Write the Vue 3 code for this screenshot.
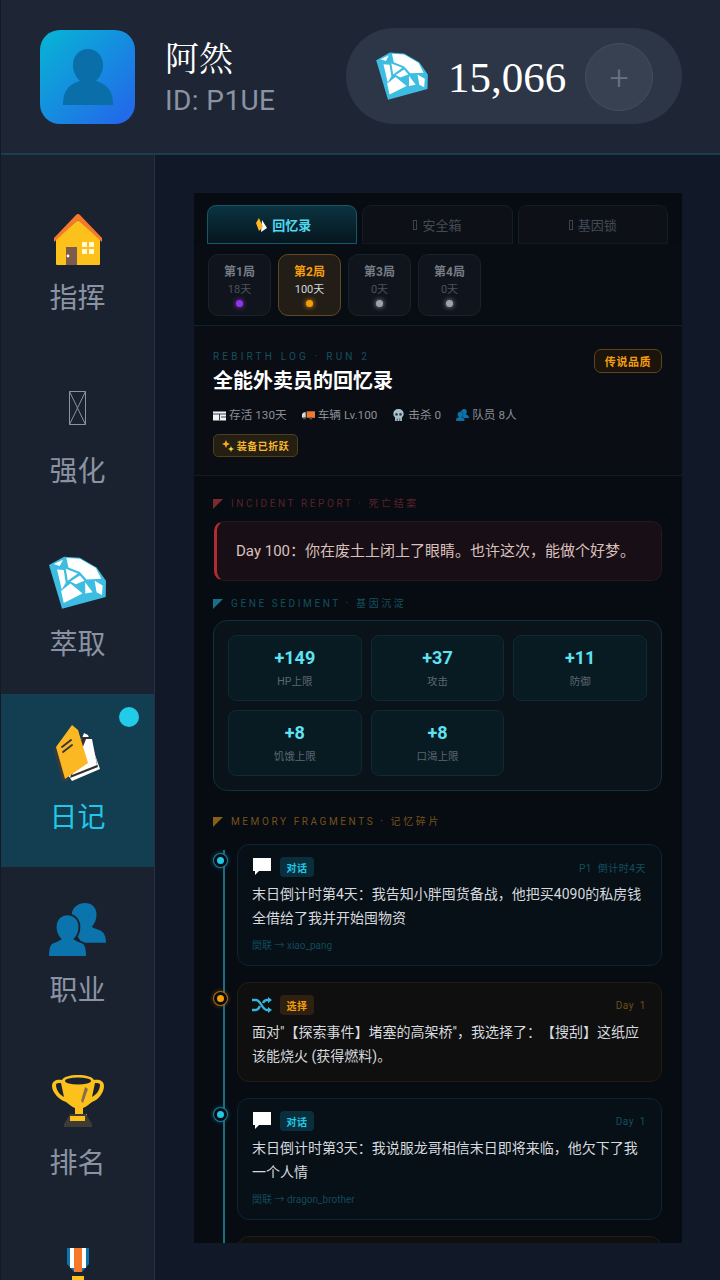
<script setup>
const nav = [
  { id: 'house', label: '指挥' },
  { id: 'tofu', label: '强化' },
  { id: 'gem', label: '萃取' },
  { id: 'book', label: '日记', active: true },
  { id: 'people', label: '职业' },
  { id: 'trophy', label: '排名' },
  { id: 'medal', label: '' }
]
const rounds = [
  { t: '第1局', d: '18天', c: 'purple' },
  { t: '第2局', d: '100天', c: 'orange', active: true },
  { t: '第3局', d: '0天', c: 'gray' },
  { t: '第4局', d: '0天', c: 'gray' }
]
const genes = [
  ['+149', 'HP上限'], ['+37', '攻击'], ['+11', '防御'], ['+8', '饥饿上限'], ['+8', '口渴上限']
]
const logs = [
  { kind: 'talk', icon: 'bubble', tag: '对话', meta: 'P1  倒计时4天', text: '末日倒计时第4天：我告知小胖囤货备战，他把买4090的私房钱全借给了我并开始囤物资', link: '関联 → xiao_pang' },
  { kind: 'pick', icon: 'shuffle', tag: '选择', meta: 'Day  1', text: '面对"【探索事件】堵塞的高架桥"，我选择了：【搜刮】这纸应该能烧火 (获得燃料)。' },
  { kind: 'talk', icon: 'bubble', tag: '对话', meta: 'Day  1', text: '末日倒计时第3天：我说服龙哥相信末日即将来临，他欠下了我一个人情', link: '関联 → dragon_brother' },
  { kind: 'pick stub' }
]
</script>

<template>
  <svg class="defs" aria-hidden="true">
    <symbol id="gem" viewBox="0 0 170 158">
      <path fill="#3dbde2" d="M0 27 45 2 92 5 142 34 170 74 169 122 39 157Z" />
      <path fill="#fff" d="M14 24 42 11 32 30ZM52 6 92 8 140 36 156 68 112 70 92 48 58 34ZM50 38 86 52 56 74ZM24 40 44 42 50 80 38 100ZM92 58 106 74 80 84 64 76ZM64 82 100 112 44 140 36 104ZM108 78 130 108 108 112ZM136 74 160 88 158 116 142 108Z" />
    </symbol>
    <symbol id="house" viewBox="0 0 52 52">
      <path fill="#fcc21b" d="M4 24 26 6 48 24V50a1 1 0 0 1-1 1H5a1 1 0 0 1-1-1Z" />
      <path fill="#f5792b" d="M26 0a3 3 0 0 1 2 1L50 24V28L26 6 2 28V24L24 1a3 3 0 0 1 2-1Z" />
      <path fill="#7d5a4b" d="M14 33H25V51H14Z" />
      <circle cx="16" cy="42" r="1.400" fill="#fff" />
      <path fill="#fff7d6" d="M30 28h5v5h-5zM37 28h5v5h-5zM30 35h5v5h-5zM37 35h5v5h-5z" />
    </symbol>
    <symbol id="book" viewBox="0 0 48 58">
      <path fill="#3a3a3a" d="M2 22 0 26 8 56 14 56 16 40Z" />
      <path fill="#fff" d="M30 8 34 10 46 44 18 56 14 50Z" />
      <path fill="#34302c" d="M28 12 36 12 44 42 16 53Z" />
      <path fill="#fff" d="M32 14 38 14 43 40 18 50Z" />
      <path fill="#fcb822" d="M18 0 24 5 34 38 11 54 2 22Z" />
      <path stroke="#3a3a3a" stroke-width="2" stroke-linecap="round" fill="none" d="M8 22 17 15M9 27 18 20" />
    </symbol>
    <symbol id="people" viewBox="0 0 60 56">
      <path fill="#0b74ad" d="M38 0c7 0 12 5 12 12 0 6-2 10-5 13 3 2 5 2 9 4 4 2 6 6 6 13H34c-2-6-7-10-12-12 2-1 4-2 6-5-3-3-4-8-4-13 0-7 7-12 14-12Z" />
      <path fill="#0b74ad" stroke="#1a2230" stroke-width="2" d="M19 12c7 0 13 5 13 13 0 6-2 10-5 13 3 2 6 3 9 4 3 2 4 6 4 15H-1c0-9 1-13 4-15 3-1 6-2 9-4-3-3-5-7-5-13 0-8 6-13 12-13Z" />
    </symbol>
    <symbol id="person" viewBox="0 0 50 56">
      <path fill="#0a6ea8" d="M25 0c9 0 15 7 15 16 0 7-3 12-7 16 4 1 8 3 11 6 4 4 6 9 6 18H0c0-9 2-14 6-18 3-3 7-5 11-6-4-4-7-9-7-16C10 7 16 0 25 0Z" />
    </symbol>
    <symbol id="trophy" viewBox="0 0 52 52">
      <path fill="#fcc21b" fill-rule="evenodd" d="M26 0c8 0 15 2 16 5 4-1 10 0 10 6 0 7-6 14-12 16-3 2-6 5-9 6v6h4v4H19v-4h4v-6c-3-1-6-4-9-6C8 25 0 18 0 11 0 5 6 4 10 5 11 2 18 0 26 0ZM4 10c0 5 4 10 8 12L9 8C7 8 4 8 4 10Zm44 0c0-2-3-2-5-2l-3 14c4-2 8-7 8-12Z" />
      <ellipse cx="26" cy="6" rx="13" ry="3.400" fill="#1a2230" />
      <path fill="#8a6d4c" d="M33 12 36 14 31 28 29 26Z" />
      <path fill="#3e3a35" d="M12 52V49L18 39H34L40 49V52Z" />
      <path fill="#fcc21b" d="M18 41H33V46H18Z" />
    </symbol>
    <symbol id="medal" viewBox="0 0 52 52">
      <path fill="#0b74ad" d="M15 0H37V16L30 24H22L15 16Z" />
      <path fill="#fff" d="M18 0H34V20H18Z" />
      <path fill="#f5792b" d="M22 0H30V24H22Z" />
      <path fill="#fcc21b" d="M20 28H32V32C38 34 42 39 42 44 42 50 34 52 26 52 18 52 10 50 10 44 10 39 14 34 20 32Z" />
    </symbol>
    <symbol id="tofu" viewBox="0 0 17 34">
      <path fill="none" stroke="#8b93a3" d="M.5.5H16.500V33.500H.5ZM.5.5 16.500 33.500M16.500.5.5 33.500" />
    </symbol>
    <symbol id="bubble" viewBox="0 0 20 20">
      <path fill="#fff" d="M1 1H19V14H7L3 18V14H1Z" />
    </symbol>
    <symbol id="shuffle" viewBox="0 0 20 16">
      <path fill="none" stroke="#35b6dc" stroke-width="2.400" d="M0 3H4C9 3 10 13 15 13H17M0 13H4C6 13 7 11 8 9M11 6C12 4 13 3 15 3H17" />
      <path fill="#35b6dc" d="M16 0 20 3 16 6ZM16 10 20 13 16 16Z" />
    </symbol>
    <symbol id="calendar" viewBox="0 0 13 11">
      <path fill="#f2f2f2" d="M0 2H13V11H0Z" />
      <path fill="#3a4250" d="M0 4H13V5H0ZM6 5H7V11H6ZM8 7H13V8H8Z" />
    </symbol>
    <symbol id="truck" viewBox="0 0 14 10">
      <path fill="#ee7a2e" d="M5 1H14V8H5Z" />
      <path fill="#d9d9d9" d="M0 4 2 2H4V8H0Z" />
      <circle cx="2.500" cy="8.500" r="1.400" fill="#555" /><circle cx="9.500" cy="8.500" r="1.400" fill="#555" />
    </symbol>
    <symbol id="skull" viewBox="0 0 12 14">
      <path fill="#a7c0c9" d="M6 0c3.500 0 6 2.400 6 5.800 0 2-1 3.200-2 4V14H2V9.800C1 9 0 7.800 0 5.800 0 2.400 2.500 0 6 0Z" />
      <circle cx="3.700" cy="6.300" r="1.500" fill="#33414a" /><circle cx="8.300" cy="6.300" r="1.500" fill="#33414a" />
      <path fill="#33414a" d="M4 11h1v3H4zM7 11h1v3H7z" />
    </symbol>
    <symbol id="spark" viewBox="0 0 12 12">
      <path fill="#f5a623" d="M4 0 5.200 2.800 8 4 5.200 5.200 4 8 2.800 5.200 0 4 2.800 2.800Z" />
      <path fill="#fcd34d" d="M9 6 9.800 8 12 9 9.800 10 9 12 8.200 10 6 9 8.200 8Z" />
    </symbol>
    <symbol id="tinybook" viewBox="0 0 12 14">
      <path fill="#fff" d="M7 2 12 10 6 14Z" />
      <path fill="#fcb822" d="M4 0 8 9 4 13 1 5Z" />
    </symbol>
  </svg>

  <div class="app">
    <header class="top">
      <div class="avatar"><svg class="person"><use href="#person" /></svg></div>
      <div class="who">
        <div class="name">阿然</div>
        <div class="uid">ID: P1UE</div>
      </div>
      <div class="wallet">
        <svg class="wallet-gem"><use href="#gem" /></svg>
        <span class="amount">15,066</span>
        <button class="plus">+</button>
      </div>
    </header>

    <div class="body">
      <nav class="side">
        <div v-for="n in nav" :key="n.id" class="nav-item" :class="{ on: n.active }">
          <i v-if="n.active" class="nav-dot"></i>
          <svg class="nav-icon" :class="'ni-' + n.id"><use :href="'#' + n.id" /></svg>
          <span v-if="n.label" class="nav-label">{{ n.label }}</span>
        </div>
      </nav>

      <main class="main">
        <section class="panel">
          <div class="tabs">
            <div class="tab on"><svg class="tab-ic"><use href="#tinybook" /></svg>回忆录</div>
            <div class="tab"><i class="tofu"></i>安全箱</div>
            <div class="tab"><i class="tofu"></i>基因锁</div>
          </div>

          <div class="rounds">
            <div v-for="r in rounds" :key="r.t" class="round" :class="{ on: r.active }">
              <b>{{ r.t }}</b>
              <span>{{ r.d }}</span>
              <i class="round-dot" :class="r.c"></i>
            </div>
          </div>

          <div class="hero">
            <div class="hero-top">
              <div>
                <div class="eyebrow">REBIRTH LOG · RUN 2</div>
                <h1>全能外卖员的回忆录</h1>
              </div>
              <span class="quality">传说品质</span>
            </div>
            <div class="stats">
              <span><svg class="st-ic"><use href="#calendar" /></svg>存活 130天</span>
              <span><svg class="st-ic"><use href="#truck" /></svg>车辆 Lv.100</span>
              <span><svg class="st-ic"><use href="#skull" /></svg>击杀 0</span>
              <span><svg class="st-ic"><use href="#people" /></svg>队员 8人</span>
            </div>
            <div class="warp"><svg class="warp-ic"><use href="#spark" /></svg>装备已折跃</div>
          </div>

          <div class="content">
            <div class="sec red"><i></i>INCIDENT REPORT · 死亡结案</div>
            <div class="death">Day 100：你在废土上闭上了眼睛。也许这次，能做个好梦。</div>

            <div class="sec cyan"><i></i>GENE SEDIMENT · 基因沉淀</div>
            <div class="genes">
              <div v-for="g in genes" :key="g[1]" class="gene">
                <b>{{ g[0] }}</b>
                <span>{{ g[1] }}</span>
              </div>
            </div>

            <div class="sec amber"><i></i>MEMORY FRAGMENTS · 记忆碎片</div>
            <div class="timeline">
              <div class="tl-line"></div>
              <article v-for="(l, i) in logs" :key="i" class="log" :class="l.kind">
                <template v-if="l.text">
                  <i class="tl-dot"></i>
                  <div class="log-head">
                    <svg class="log-ic"><use :href="'#' + l.icon" /></svg>
                    <span class="log-tag">{{ l.tag }}</span>
                    <span class="log-meta">{{ l.meta }}</span>
                  </div>
                  <p>{{ l.text }}</p>
                  <div v-if="l.link" class="log-link">{{ l.link }}</div>
                </template>
              </article>
            </div>
          </div>
        </section>
      </main>
    </div>
  </div>
</template>

<style>
html, body { margin: 0; background: #111827; }
</style>

<style scoped>
.defs { display: block; width: 0; height: 0; }
.app {
  width: 720px; height: 1280px; overflow: hidden; background: #111827;
  font-family: Roboto, "Noto Sans CJK SC", sans-serif; color: #fff;
  border-left: 1px solid #111a26; box-sizing: border-box; text-spacing-trim: space-all;
}
.top {
  height: 155px; box-sizing: border-box; display: flex; align-items: center;
  padding: 0 38px 0 39px; border-bottom: 2px solid #17404f; background: #1e2635;
}
.avatar {
  width: 95px; height: 94px; border-radius: 20px;
  background: linear-gradient(135deg, #06b6d4, #2563eb);
  display: flex; align-items: center; justify-content: center; flex: none;
}
.person { width: 50px; height: 56px; }
.who { margin-left: 30px; flex: 1; }
.name { font-family: "Liberation Serif", "Noto Serif CJK SC", serif; font-size: 34px; line-height: 40px; margin-top: 3px; }
.uid { font-size: 28px; line-height: 32px; letter-spacing: .4px; color: #8b93a3; margin-top: 5px; }
.wallet {
  width: 336px; height: 96px; box-sizing: border-box; border-radius: 48px; background: #2d3646;
  display: flex; align-items: center; padding: 0 29px 0 30px; margin-top: -2px;
}
.wallet-gem { width: 52px; height: 48px; flex: none; }
.amount { font-family: "Liberation Serif", serif; font-size: 43px; margin-left: 20px; flex: 1; margin-top: 4px; }
.plus {
  width: 68px; height: 68px; border-radius: 50%; border: 1px solid #454e5f; background: #374151;
  color: #6b7280; font-size: 34px; font-weight: 300; padding: 0; margin-top: 2px; font-family: Roboto, sans-serif;
}

.body { display: flex; height: 1125px; }
.side { width: 154px; flex: none; box-sizing: border-box; padding-top: 20px; background: #1a2230; border-right: 1px solid #283140; }
.nav-item {
  height: 173px; box-sizing: border-box; position: relative; display: flex; flex-direction: column;
  align-items: center; padding-top: 35px; gap: 17px; color: #8b93a3;
}
.nav-item.on { background: #133d50; color: #22c7e6; }
.nav-dot { position: absolute; left: 118px; top: 13px; width: 20px; height: 20px; border-radius: 50%; background: #22cbe8; }
.nav-icon { width: 52px; height: 52px; display: block; flex: none; }
.ni-house { margin: 4px 0 -4px; }
.ni-gem { width: 57px; height: 53px; margin-bottom: -1px; }
.ni-book { width: 48px; height: 58px; margin: -4px 0 -2px; }
.ni-people { width: 57px; height: 55px; margin-bottom: -3px; }
.ni-tofu { width: 17px; height: 34px; margin: 8px 0 10px; }
.nav-label { font-size: 28px; line-height: 40px; }

.main { flex: 1; padding: 38px 38px 0 39px; min-width: 0; }
.panel { height: 1050px; background: #070b12; overflow: hidden; }

.tabs { display: flex; gap: 5px; padding: 12px 14px 0 13px; }
.tab {
  flex: 1; height: 39px; box-sizing: border-box; border: 1px solid #161c24; border-bottom-color: #12181f; border-radius: 9px 9px 0 0; background: #0d1117;
  font-size: 13px; color: #434a55; display: flex; align-items: center; justify-content: center; gap: 4px;
}
.tab.on { background: linear-gradient(180deg, #0b3341, #06161f); border-color: #14596a; color: #4fd8ee; font-weight: 700; gap: 5px; }
.tab-ic { width: 12px; height: 14px; margin-left: 2px; }
.tofu { width: 4px; height: 10px; border: 1px solid #3c434d; box-sizing: border-box; margin-right: 1px; }

.rounds { display: flex; gap: 7px; padding: 10px 14px 9px; border-bottom: 1px solid #10222c; background: #080d14; }
.round {
  width: 63px; height: 62px; box-sizing: border-box; border: 1px solid #1b212a; border-radius: 10px; background: #10151d;
  display: flex; flex-direction: column; align-items: center; padding-top: 9px; color: #767c86;
}
.round b { font-size: 12px; line-height: 16px; font-weight: 700; }
.round span { font-size: 11px; line-height: 15px; margin-top: 2px; color: #4b515b; }
.round.on { background: #231d17; border-color: #5f4a22; }
.round.on b { color: #f59e0b; }
.round.on span { color: #d1d5db; }
.round-dot { width: 7px; height: 7px; border-radius: 50%; margin-top: 3px; }
.round-dot.purple { background: #9333ea; box-shadow: 0 0 5px #9333ea; }
.round-dot.orange { background: #f59e0b; box-shadow: 0 0 5px #f59e0b; }
.round-dot.gray { background: #9ca3af; box-shadow: 0 0 5px #9ca3af; }

.hero { height: 150px; box-sizing: border-box; padding: 23px 20px 0 19px; background: #0a0d14; border-bottom: 1px solid #17191d; }
.hero-top { display: flex; justify-content: space-between; align-items: flex-start; }
.eyebrow { font-size: 10px; line-height: 14px; letter-spacing: 3.2px; color: #14505f; margin-top: 1px; }
h1 { margin: 4px 0 0; font-size: 20px; line-height: 26px; font-weight: 700; color: #fff; }
.quality {
  width: 68px; height: 24px; box-sizing: border-box; border: 1px solid #5d461c; border-radius: 7px; background: #1a140c;
  color: #f59e0b; font-size: 11px; font-weight: 700; letter-spacing: .6px; display: flex; align-items: center; justify-content: center;
}
.stats { display: flex; gap: 15px; font-size: 11.7px; line-height: 16px; color: #8b8f96; margin-top: 13px; }
.stats span { display: flex; align-items: center; gap: 3px; }
.st-ic { width: 13px; height: 12px; }
.warp {
  width: 85px; height: 23px; box-sizing: border-box; margin-top: 11px; border: 1px solid #4b3f1c; border-radius: 5px; background: #241f12;
  color: #f5b82e; font-size: 10px; font-weight: 700; letter-spacing: .5px; display: flex; align-items: center; justify-content: center; gap: 3px;
}
.warp-ic { width: 12px; height: 12px; }

.content { padding: 0 20px 0 19px; }
.sec { display: flex; align-items: center; font-size: 10px; line-height: 14px; letter-spacing: 2.6px; }
.sec i { width: 10px; height: 10px; margin-right: 8px; clip-path: polygon(0 0, 100% 0, 0 100%); }
.sec.red { color: #5b2128; margin-top: 21px; }
.sec.red i { background: #7b2a31; }
.sec.cyan { color: #14505f; margin-top: 16px; }
.sec.cyan i { background: #176f8a; }
.sec.amber { color: #76521a; margin-top: 24px; }
.sec.amber i { background: #8a5f18; }
.death {
  margin: 10px 0 0 1px; height: 60px; box-sizing: border-box; padding: 0 0 3px 19px; display: flex; align-items: center;
  border: 1px solid #261820; border-left: 3px solid #b52a30; border-radius: 10px; background: #170f15;
  font-size: 15px; color: #dcc0bd;
}
.genes {
  margin-top: 9px; height: 171px; box-sizing: border-box; padding: 14px; border: 1px solid #10303a; border-radius: 14px; background: #0a1319;
  display: grid; grid-template-columns: repeat(3, 1fr); grid-auto-rows: 66px; gap: 9px;
}
.gene { border: 1px solid #0e2a34; border-radius: 8px; background: #081a22; display: flex; flex-direction: column; align-items: center; padding-top: 11px; box-sizing: border-box; }
.gene b { font-size: 18px; line-height: 22px; font-weight: 700; color: #5fe3f2; }
.gene span { font-size: 10.5px; line-height: 14px; margin-top: 6px; color: #5e6871; }

.timeline { position: relative; padding-left: 24px; margin-top: 15px; display: flex; flex-direction: column; gap: 16.5px; }
.tl-line { position: absolute; left: 10px; top: 6px; bottom: 0; width: 2px; background: #186f80; }
.log { position: relative; flex: none; box-sizing: border-box; border: 1px solid #0d2530; border-radius: 12px; padding: 12px 15px 11.5px 14px; background: #070f17; }
.log.pick { background: #0f0f10; border-color: #221d14; padding-bottom: 12.5px; }
.log.stub { height: 60px; }
.tl-dot { position: absolute; left: -24px; top: 9px; width: 7px; height: 7px; border-radius: 50%; background: #22c7e6; border: 3px solid #070b12; box-shadow: 0 0 0 1px #17819a, 0 0 5px #17819a; }
.log.pick .tl-dot { background: #f59e0b; box-shadow: 0 0 0 1px #a86c10, 0 0 5px #a86c10; }
.log-head { display: flex; align-items: center; height: 20px; }
.log-ic { width: 20px; height: 20px; margin-right: 8px; flex: none; }
.log.pick .log-ic { height: 16px; }
.log-tag { width: 34px; height: 20px; border-radius: 4px; background: #0a2f3c; color: #22c7e6; font-size: 10px; font-weight: 700; letter-spacing: .5px; display: flex; align-items: center; justify-content: center; }
.log.pick .log-tag { background: #2e2112; color: #f59e0b; }
.log-meta { margin-left: auto; font-size: 10px; letter-spacing: .5px; color: #12505f; white-space: pre; }
.log.pick .log-meta { color: #6e4e16; }
p { margin: 5px 0 0; font-size: 14px; line-height: 24px; color: #d6d9dd; }
.log-link { margin-top: 9px; font-size: 10px; line-height: 14px; color: #104a58; }
</style>
